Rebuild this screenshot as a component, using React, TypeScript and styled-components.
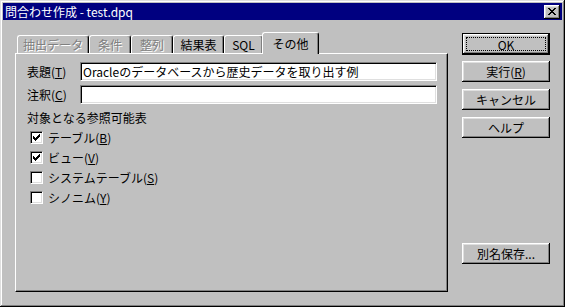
import React from "react";
import styled, { createGlobalStyle, css } from "styled-components";

const FONT = `"Noto Sans CJK JP", "MS UI Gothic", "DejaVu Sans", sans-serif`;

const Global = createGlobalStyle`
  html, body { margin: 0; padding: 0; background: #c0c0c0; }
  body { font-family: ${FONT}; font-size: 12px; }
  * { box-sizing: border-box; }
`;

const Window = styled.div`
  width: 565px;
  height: 307px;
  background: #c0c0c0;
  padding: 3px;
  display: flex;
  flex-direction: column;
  font-family: ${FONT};
  font-size: 12px;
  color: #000;
  box-shadow: inset -1px -1px #000, inset 1px 1px #dfdfdf, inset -2px -2px #808080,
    inset 2px 2px #fff;
`;

const TitleBar = styled.div`
  height: 17px;
  background: #000080;
  color: #fff;
  display: flex;
  align-items: center;
  justify-content: space-between;
  padding: 0 2px 0 2px;
  line-height: 17px;
`;

const TitleText = styled.span`
  font-size: 12px;
  letter-spacing: 0;
`;

const CloseBtn = styled.div`
  width: 16px;
  height: 14px;
  background: #c0c0c0;
  display: flex;
  align-items: center;
  justify-content: center;
  box-shadow: inset -1px -1px #000, inset 1px 1px #fff, inset -2px -2px #808080,
    inset 2px 2px #dfdfdf;
`;

const Body = styled.div`
  flex: 1;
  display: flex;
  padding: 12px 0 12px 12px;
`;

const LeftCol = styled.div`
  width: 433px;
  display: flex;
  flex-direction: column;
`;

const TabStrip = styled.div`
  height: 21px;
  display: flex;
  align-items: flex-end;
  padding-left: 2px;
`;

const Tab = styled.div<{ $w: number; $active?: boolean; $disabled?: boolean }>`
  width: ${(p) => p.$w}px;
  height: 18px;
  display: flex;
  align-items: center;
  justify-content: center;
  border-top: 1px solid #fff;
  border-left: 1px solid #fff;
  border-right: 1px solid #000;
  border-radius: 3px 3px 0 0;
  box-shadow: inset -1px 0 #808080;
  background: #c0c0c0;
  white-space: nowrap;
  color: ${(p) => (p.$disabled ? "#808080" : "#000")};
  text-shadow: ${(p) => (p.$disabled ? "1px 1px 0 #fff" : "none")};
  ${(p) =>
    p.$active &&
    css`
      height: 22px;
      margin-bottom: -1px;
      margin-left: -1px;
      position: relative;
      z-index: 1;
      padding-bottom: 1px;
    `}
`;

const Panel = styled.div`
  height: 239px;
  background: #c0c0c0;
  border-top: 1px solid #fff;
  border-left: 1px solid #fff;
  border-right: 1px solid #000;
  border-bottom: 1px solid #000;
  box-shadow: inset -1px -1px #808080;
  padding: 8px 10px 0 11px;
  display: flex;
  flex-direction: column;
`;

const FieldRow = styled.div<{ $gap?: number }>`
  display: flex;
  align-items: center;
  height: 19px;
  margin-top: ${(p) => p.$gap ?? 0}px;
`;

const FieldLabel = styled.label`
  width: 53px;
  white-space: nowrap;
`;

const TextBox = styled.div`
  flex: 1;
  height: 19px;
  background: #fff;
  border-top: 1px solid #808080;
  border-left: 1px solid #808080;
  border-bottom: 1px solid #fff;
  border-right: 1px solid #fff;
  box-shadow: inset 1px 1px #000, inset -1px -1px #dfdfdf;
  padding: 0 2px;
  line-height: 17px;
  white-space: nowrap;
  overflow: hidden;
`;

const GroupLabel = styled.div`
  margin-top: 7px;
  height: 14px;
  line-height: 14px;
`;

const CheckList = styled.div`
  margin-top: 2px;
  display: flex;
  flex-direction: column;
`;

const CheckRow = styled.div`
  height: 20px;
  display: flex;
  align-items: center;
  padding-left: 3px;
  gap: 5px;
`;

const Box = styled.div`
  width: 13px;
  height: 13px;
  background: #fff;
  border-top: 1px solid #808080;
  border-left: 1px solid #808080;
  border-bottom: 1px solid #fff;
  border-right: 1px solid #fff;
  box-shadow: inset 1px 1px #000, inset -1px -1px #dfdfdf;
  display: flex;
  align-items: center;
  justify-content: center;
`;

const RightCol = styled.div`
  width: 88px;
  margin-left: 14px;
  display: flex;
  flex-direction: column;
  gap: 7px;
  padding-top: 1px;
`;

const Button = styled.div<{ $default?: boolean; $bottom?: boolean }>`
  width: 88px;
  height: 21px;
  background: #c0c0c0;
  display: flex;
  align-items: center;
  justify-content: center;
  position: relative;
  white-space: nowrap;
  box-shadow: inset -1px -1px #000, inset 1px 1px #fff, inset -2px -2px #808080,
    inset 2px 2px #dfdfdf;
  ${(p) =>
    p.$default &&
    css`
      height: 22px;
      margin-bottom: -1px;
      box-shadow: inset 0 0 0 1px #000, inset -2px -2px #000, inset 2px 2px #fff,
        inset -3px -3px #808080, inset 3px 3px #dfdfdf;
      &::after {
        content: "";
        position: absolute;
        inset: 4px;
        border: 1px dotted #000;
      }
    `}
  ${(p) =>
    p.$bottom &&
    css`
      margin-top: auto;
      margin-bottom: 28px;
    `}
`;

const CheckMark = () => {
  const px: [number, number][] = [
    [6, 0],
    [5, 1], [6, 1],
    [0, 2], [4, 2], [5, 2], [6, 2],
    [0, 3], [1, 3], [3, 3], [4, 3], [5, 3],
    [0, 4], [1, 4], [2, 4], [3, 4], [4, 4],
    [1, 5], [2, 5], [3, 5],
    [2, 6],
  ];
  const d = px.map(([x, y]) => `M${x} ${y}h1v1h-1z`).join("");
  return (
    <svg width="7" height="7" viewBox="0 0 7 7" shapeRendering="crispEdges">
      <path d={d} fill="#000" />
    </svg>
  );
};

const CloseIcon = () => {
  const px: [number, number][] = [
    [0, 0], [1, 0], [6, 0], [7, 0],
    [1, 1], [2, 1], [5, 1], [6, 1],
    [2, 2], [3, 2], [4, 2], [5, 2],
    [3, 3], [4, 3],
    [2, 4], [3, 4], [4, 4], [5, 4],
    [1, 5], [2, 5], [5, 5], [6, 5],
    [0, 6], [1, 6], [6, 6], [7, 6],
  ];
  const d = px.map(([x, y]) => `M${x} ${y}h1v1h-1z`).join("");
  return (
    <svg width="8" height="7" viewBox="0 0 8 7" shapeRendering="crispEdges">
      <path d={d} fill="#000" />
    </svg>
  );
};

const tabs = [
  { label: "抽出データ", w: 72, disabled: true },
  { label: "条件", w: 42, disabled: true },
  { label: "整列", w: 42, disabled: true },
  { label: "結果表", w: 51 },
  { label: "SQL", w: 39 },
  { label: "その他", w: 57, active: true },
];

const checks = [
  { label: "テーブル", key: "B", checked: true },
  { label: "ビュー", key: "V", checked: true },
  { label: "システムテーブル", key: "S", checked: false },
  { label: "シノニム", key: "Y", checked: false },
];

export default function App() {
  return (
    <>
      <Global />
      <Window>
        <TitleBar>
          <TitleText>問合わせ作成 - test.dpq</TitleText>
          <CloseBtn>
            <CloseIcon />
          </CloseBtn>
        </TitleBar>
        <Body>
          <LeftCol>
            <TabStrip>
              {tabs.map((t) => (
                <Tab key={t.label} $w={t.w} $active={t.active} $disabled={t.disabled}>
                  {t.label}
                </Tab>
              ))}
            </TabStrip>
            <Panel>
              <FieldRow>
                <FieldLabel>
                  表題(<u>T</u>)
                </FieldLabel>
                <TextBox>Oracleのデータベースから歴史データを取り出す例</TextBox>
              </FieldRow>
              <FieldRow $gap={4}>
                <FieldLabel>
                  注釈(<u>C</u>)
                </FieldLabel>
                <TextBox />
              </FieldRow>
              <GroupLabel>対象となる参照可能表</GroupLabel>
              <CheckList>
                {checks.map((c) => (
                  <CheckRow key={c.key}>
                    <Box>{c.checked && <CheckMark />}</Box>
                    <span>
                      {c.label}(<u>{c.key}</u>)
                    </span>
                  </CheckRow>
                ))}
              </CheckList>
            </Panel>
          </LeftCol>
          <RightCol>
            <Button $default>OK</Button>
            <Button>
              実行(<u>R</u>)
            </Button>
            <Button>キャンセル</Button>
            <Button>ヘルプ</Button>
            <Button $bottom>別名保存...</Button>
          </RightCol>
        </Body>
      </Window>
    </>
  );
}
